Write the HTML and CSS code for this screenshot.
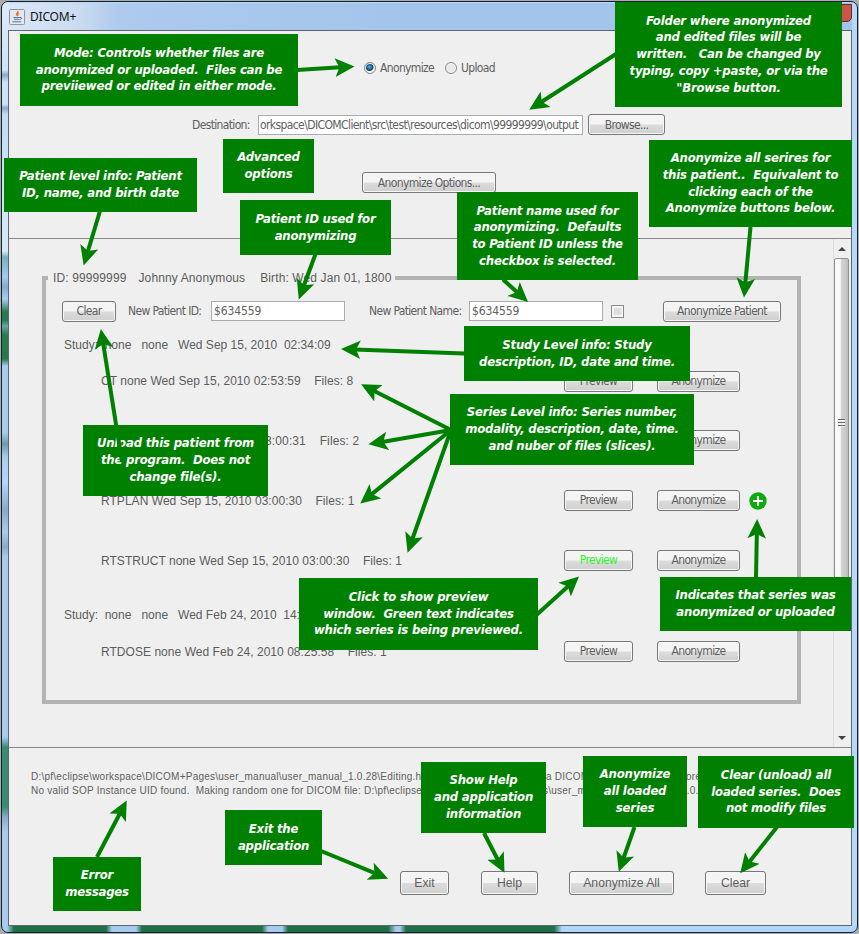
FILE: index.html
```
<!DOCTYPE html>
<html lang="en">
<head>
<meta charset="utf-8">
<title>DICOM+</title>
<link rel="stylesheet" href="styles.css">
</head>
<body>
<div class="window">
  <header class="titlebar">
    <svg class="java" width="16" height="16" viewBox="0 0 16 16"><rect x=".5" y=".5" width="15" height="15" rx="1" fill="#e3e8ef" stroke="#8796ab"/><path d="M8.700 2c1 1.500-2.500 2.500-1 4.500M10 4c-2 1-1.700 2-.8 3" fill="none" stroke="#e8762c" stroke-width="1.400"/><path d="M4.500 8.500h6.500M5 10.300h5.500M3.300 12.800h9M11 8.500c2.500-.5 2 1.800-.2 2" fill="none" stroke="#54779c"/></svg>
    <h1>DICOM+</h1>
    <span class="close"></span>
  </header>
  <main class="client">
    <section class="settings">
      <div class="modes">
        <label><i class="radio on"></i>Anonymize</label>
        <label><i class="radio"></i>Upload</label>
      </div>
      <div class="destination">
        <label>Destination:</label>
        <span class="field path">orkspace\DICOMClient\src\test\resources\dicom\99999999\output</span>
        <button class="browse">Browse...</button>
      </div>
      <button class="options">Anonymize Options...</button>
    </section>
    <section class="loaded">
      <fieldset class="patient">
        <legend><span>ID: 99999999</span><span>Johnny Anonymous</span><span>Birth: Wed Jan 01, 1800</span></legend>
        <div class="identity">
          <button class="unload">Clear</button>
          <label class="idlabel">New Patient ID:</label>
          <span class="field">$634559</span>
          <label class="namelabel">New Patient Name:</label>
          <span class="field">$634559</span>
          <i class="check"></i>
          <button class="anonpatient">Anonymize Patient</button>
        </div>
        <div class="study">Study:  none   none   Wed Sep 15, 2010  02:34:09</div>
        <div class="series first"><span>CT none Wed Sep 15, 2010 02:53:59    Files: 8</span><button>Preview</button><button>Anonymize</button></div>
        <div class="series mr"><span>MR none Wed Sep 15, 2010 03:00:31    Files: 2</span><button>Preview</button><button>Anonymize</button></div>
        <div class="series"><span>RTPLAN Wed Sep 15, 2010 03:00:30    Files: 1</span><button>Preview</button><button>Anonymize</button><svg width="18" height="18" viewBox="0 0 18 18"><circle cx="9" cy="9" r="8.700" fill="#0bab0b"/><path d="M9 4v10M4 9h10" stroke="#fff" stroke-width="2"/></svg></div>
        <div class="series"><span>RTSTRUCT none Wed Sep 15, 2010 03:00:30    Files: 1</span><button class="active">Preview</button><button>Anonymize</button></div>
        <div class="study second">Study:  none   none   Wed Feb 24, 2010  14:05:10</div>
        <div class="series last"><span>RTDOSE none Wed Feb 24, 2010 08:25:58    Files: 1</span><button>Preview</button><button>Anonymize</button></div>
      </fieldset>
      <div class="scrollbar">
        <svg width="8" height="5" viewBox="0 0 8 5"><path d="M0 5l4-4 4 4z" fill="#444"/></svg>
        <div class="thumb"><i></i></div>
        <svg width="8" height="5" viewBox="0 0 8 5"><path d="M0 0l4 4 4-4z" fill="#444"/></svg>
      </div>
    </section>
    <section class="log">
      <p><span class="file">D:\pf\eclipse\workspace\DICOM+Pages\user_manual\user_manual_1.0.28\Editing.html does not appear to be</span><span class="reason">a DICOM file and will be ign</span>ored</p>
      <p>No valid SOP Instance UID found.  Making random one for DICOM file: D:\pf\eclipse\workspace\DICOM+Pages\user_manual\user_manual_1.0.28</p>
    </section>
    <footer class="actions">
      <button class="exit">Exit</button>
      <button class="help">Help</button>
      <button class="all">Anonymize All</button>
      <button class="clear">Clear</button>
    </footer>
  </main>
</div>

<div class="note n-mode">Mode: Controls whether files are
anonymized or uploaded.  Files can be
previiewed or edited in either mode.</div>
<div class="note n-folder">Folder where anonymized
and edited files will be
written.   Can be changed by
typing, copy +paste, or via the
"Browse button.</div>
<div class="note n-patient">Patient level info: Patient
ID, name, and birth date</div>
<div class="note n-advanced">Advanced
options</div>
<div class="note n-pid">Patient ID used for
anonymizing</div>
<div class="note n-pname">Patient name used for
anonymizing.  Defaults
to Patient ID unless the
checkbox is selected.</div>
<div class="note n-allseries">Anonymize all serires for
this patient..  Equivalent to
clicking each of the
Anonymize buttons below.</div>
<div class="note n-study">Study Level info: Study
description, ID, date and time.</div>
<div class="note n-series">Series Level info: Series number,
modality, description, date, time.
and nuber of files (slices).</div>
<div class="note n-unload">Unload this patient from
the program.  Does not
change file(s).</div>
<div class="note n-click">Click to show preview
window.  Green text indicates
which series is being previewed.</div>
<div class="note n-indicates">Indicates that series was
anonymized or uploaded</div>
<div class="note n-error">Error
messages</div>
<div class="note n-exit">Exit the
application</div>
<div class="note n-help">Show Help
and application
information</div>
<div class="note n-all">Anonymize
all loaded
series</div>
<div class="note n-clear">Clear (unload) all
loaded series.  Does
not modify files</div>

<svg class="arrows" width="859" height="934" viewBox="0 0 859 934">
  <defs><marker id="head" markerUnits="userSpaceOnUse" markerWidth="20" markerHeight="20" refX="13" refY="10" orient="auto"><path d="M19.500 10L0 .7 4.500 10 0 19.300z" fill="#008000"/></marker></defs>
  <g stroke="#008000" stroke-width="4" marker-end="url(#head)">
    <path d="M297 70L348 66.800"/>
    <path d="M616 54L534.700 106.300"/>
    <path d="M100 211L85.500 259.200"/>
    <path d="M315.500 254L301 293.300"/>
    <path d="M503 279.500L523.200 297.700"/>
    <path d="M750.500 227L744.600 291"/>
    <path d="M464 353.500L347.500 349.200"/>
    <path d="M451 430L366.900 387.300"/>
    <path d="M451 430L374.900 443.200"/>
    <path d="M451 430L365.300 499.400"/>
    <path d="M451 430L409.700 546.500"/>
    <path d="M122 462L101.900 335.500"/>
    <path d="M537 614.500L574.200 580.800"/>
    <path d="M756 577.500L757 525.500"/>
    <path d="M97 857L123.700 806.300"/>
    <path d="M321 851L382.200 876.200"/>
    <path d="M484 833L501.500 867"/>
    <path d="M634.500 827L620.900 865.700"/>
    <path d="M777 827L744.300 868.200"/>
  </g>
</svg>
</body>
</html>
```
FILE: styles.css
```
* { box-sizing: border-box; }
body {
  margin: 0;
  width: 859px;
  height: 934px;
  position: relative;
  overflow: hidden;
  background: #a9adb0;
  font: 12px "DejaVu Sans Condensed", "DejaVu Sans", sans-serif;
  font-stretch: condensed;
  letter-spacing: -0.65px;
  color: #606060;
}
p, h1, fieldset, legend { margin: 0; padding: 0; }

.window {
  margin: 1px 1px 1px 1px;
  height: 932px;
  border: 1px solid #15222b;
  border-radius: 7px;
  padding: 1px 5px 6px 6px;
  background:
    linear-gradient(90deg, #a8caef 5px, #1f7044 12px, #1f7044 104px, #a8caef 110px, #a8caef 134px, #1f7044 140px, #1f7044 260px, #a8caef 266px, #a8caef 280px, #1f7044 286px, #1f7044 386px, #a8caef 394px, #a8caef 398px, #1f7044 404px, #1f7044 552px, #b3d5fa 560px) 0 100% / 100% 6px no-repeat,
    linear-gradient(180deg, #dcebf9 0, #cfe3f7 68px, #8aa9c9 73px, #cfe3f7 80px, #cfe3f7 102px, #8aa9c9 106px, #bfdcf7 112px, #d8eaf5 249px, #7ab0bd 255px, #a4c9f0 275px, #86a9d5 285px, #a9cdf0 297px, #26794c 310px, #26794c 318px, #6aa6a0 324px, #26794c 333px, #26794c 357px, #a8cbf0 364px, #a8cbf0 430px, #6b9aab 442px, #a9cbf0 455px, #b5d6fc 480px, #88aacd 508px, #a9cbf0 530px, #88aacd 545px, #a9cbf0 555px, #a9cbf0 735px, #398c70 745px, #398c70 805px, #88aacd 815px, #a9cbf0 830px) 0 0 / 7px 100% no-repeat,
    #b8d8f8;
}
.titlebar {
  display: flex;
  align-items: center;
  height: 27px;
  padding-left: 1px;
  background: linear-gradient(90deg, #d9e6f6, #cbdcf1 70px, #aecaed 110px, #a3c4eb 400px, #a3c4eb 100%);
}
.java { margin: 0 5px 0 0; }
h1 { font: 12px "Noto Sans", sans-serif; letter-spacing: -.2px; color: #111; }
.close { width: 38px; height: 18px; margin: -8px 0 0 auto; background: #c8564a; border: 1px solid #752922; border-radius: 0 0 5px 5px; }

.client {
  height: 896px;
  border: 1px solid #5b6670;
  background: #efefef;
  display: flex;
  flex-direction: column;
}
button {
  font: inherit;
  letter-spacing: inherit;
  color: #5f5f5f;
  height: 21px;
  padding: 0;
  white-space: nowrap;
  border: 1px solid #777;
  border-radius: 3px;
  background: linear-gradient(#f4f4f4 0 48%, #dcdcdc 52%, #cfcfcf);
  box-shadow: inset 0 0 0 1px #f7f7f7;
}
.field {
  height: 20px;
  width: 134px;
  border: 1px solid #aaacb3;
  background: #fff;
  line-height: 18px;
  padding-left: 2px;
  white-space: nowrap;
}

.settings { height: 207px; padding-top: 27px; }
.modes { display: flex; gap: 14px; height: 19px; align-items: center; padding-left: 355px; }
.modes label { display: flex; align-items: center; gap: 4px; }
.modes label:first-child { width: 67px; }
.radio { flex: none; width: 12px; height: 12px; border: 1px solid #858585; border-radius: 50%; background: #e9e9e9; box-shadow: inset 0 0 0 1px #f8f8f8; }
.radio.on { background: radial-gradient(circle at 45% 40%, #55b5e0 0, #14507c 3px, #17405f 3.500px, #eee 4.500px); }
.destination { display: flex; align-items: center; margin-top: 37px; height: 21px; padding-left: 183px; }
.destination label { width: 66px; }
.path { width: 325px; padding-left: 1px; letter-spacing: -.6px; }
.browse { width: 77px; margin-left: 5px; }
.options { display: block; width: 134px; margin: 37px 0 0 353px; }

.loaded { height: 510px; border: 1px solid #8a8a8a; border-width: 1px 0; display: flex; justify-content: space-between; }
.patient { width: 759px; height: 436px; margin: 29px 0 0 33px; border: 4px solid #b3b3b3; min-width: 0; }
legend { height: 20px; width: 347px; margin-left: 2px; padding: 0 5px; display: flex; gap: 12px; align-items: center; }
legend, .study, .series span { font: 12px "Liberation Sans", Arial, sans-serif; letter-spacing: 0; white-space: pre; color: #5c5c5c; }
legend span { letter-spacing: .12px; }
legend span:last-child { margin-left: 3px; }
.identity { height: 38px; margin-top: 4px; display: flex; align-items: center; padding-left: 16px; }
.identity > * { flex: none; }
.unload { width: 54px; }
.idlabel { width: 83px; margin-left: 12px; }
.namelabel { width: 100px; margin-left: 24px; }
.identity .field { letter-spacing: -.1px; }
.check { width: 13px; height: 13px; margin-left: 8px; border: 1px solid #8b8b8b; background: #ddd; box-shadow: inset 0 0 0 2px #f4f4f4; }
.anonpatient { width: 118px; margin-left: 39px; }
.study { height: 30px; line-height: 30px; padding-left: 18px; }
.study.second { height: 48px; line-height: 48px; }
.series { height: 60px; display: grid; grid-template-columns: 463px 69px 24px 83px 9px 18px; align-items: center; padding-left: 55px; }
.series span { letter-spacing: .04px; }
.series.mr span { letter-spacing: .11px; }
.series > :nth-child(3) { grid-column: 4; }
.series > :nth-child(4) { grid-column: 6; }
.series button { margin-bottom: 2px; }
.series.first { height: 42px; margin-bottom: 9px; }
.series.first button { margin-bottom: 0; }
.series.last { height: 26px; }
.series .active { color: #2df52d; }
.scrollbar { width: 18px; border-left: 1px solid #ddd; display: flex; flex-direction: column; align-items: center; padding: 7px 2px 6px 0; }
.thumb { width: 15px; height: 330px; margin: 7px 0 auto; border: 1px solid #909090; border-radius: 2px; background: linear-gradient(90deg, #f8f8f8 40%, #d5d5d5 50%, #bebebe); display: flex; align-items: center; justify-content: center; }
.thumb i { width: 7px; height: 8px; background: repeating-linear-gradient(#666 0 1px, #eee 1px 3px); }

.log { height: 123px; padding: 22px 0 0 22px; font: 10px/14px "Liberation Sans", Arial, sans-serif; letter-spacing: .24px; overflow: hidden; }
.log p { white-space: pre; display: flex; }
.file { width: 515px; overflow: hidden; }
.reason { width: 140px; overflow: hidden; }
.actions { display: flex; padding-left: 391px; font: 12.200px "Liberation Sans", Arial, sans-serif; letter-spacing: 0; }
.actions button { height: 24px; }
.exit { width: 49px; }
.help { width: 57px; margin-left: 32px; }
.all { width: 105px; margin-left: 31px; }
.clear { width: 61px; margin-left: 31px; }

/* Callouts lie over the window */
.note {
  position: absolute;
  display: flex;
  align-items: center;
  justify-content: center;
  text-align: center;
  background: #008000;
  color: #fff;
  font: italic bold 13px/16.700px "DejaVu Sans Condensed", "DejaVu Sans", sans-serif;
  font-stretch: condensed;
  letter-spacing: -.2px;
  white-space: pre;
}
.n-mode { left: 20px; top: 34px; width: 278px; height: 72px; }
.n-folder { left: 615px; top: 2px; width: 227px; height: 105px; }
.n-patient { left: 4px; top: 158px; width: 193px; height: 54px; }
.n-advanced { left: 223px; top: 139px; width: 91px; height: 54px; }
.n-pid { left: 240px; top: 200px; width: 151px; height: 55px; }
.n-pname { left: 457px; top: 192px; width: 181px; height: 88px; }
.n-allseries { left: 649px; top: 140px; width: 203px; height: 87px; }
.n-study { left: 464px; top: 326px; width: 226px; height: 55px; }
.n-series { left: 450px; top: 394px; width: 244px; height: 71px; }
.n-unload { left: 83px; top: 425px; width: 185px; height: 71px; }
.n-click { left: 299px; top: 578px; width: 239px; height: 72px; }
.n-indicates { left: 660px; top: 577px; width: 191px; height: 54px; }
.n-error { left: 53px; top: 857px; width: 88px; height: 54px; }
.n-exit { left: 225px; top: 810px; width: 97px; height: 55px; }
.n-help { left: 421px; top: 762px; width: 125px; height: 71px; }
.n-all { left: 583px; top: 756px; width: 104px; height: 71px; }
.n-clear { left: 698px; top: 756px; width: 156px; height: 72px; }
.arrows { position: absolute; left: 0; top: 0; pointer-events: none; }
```
